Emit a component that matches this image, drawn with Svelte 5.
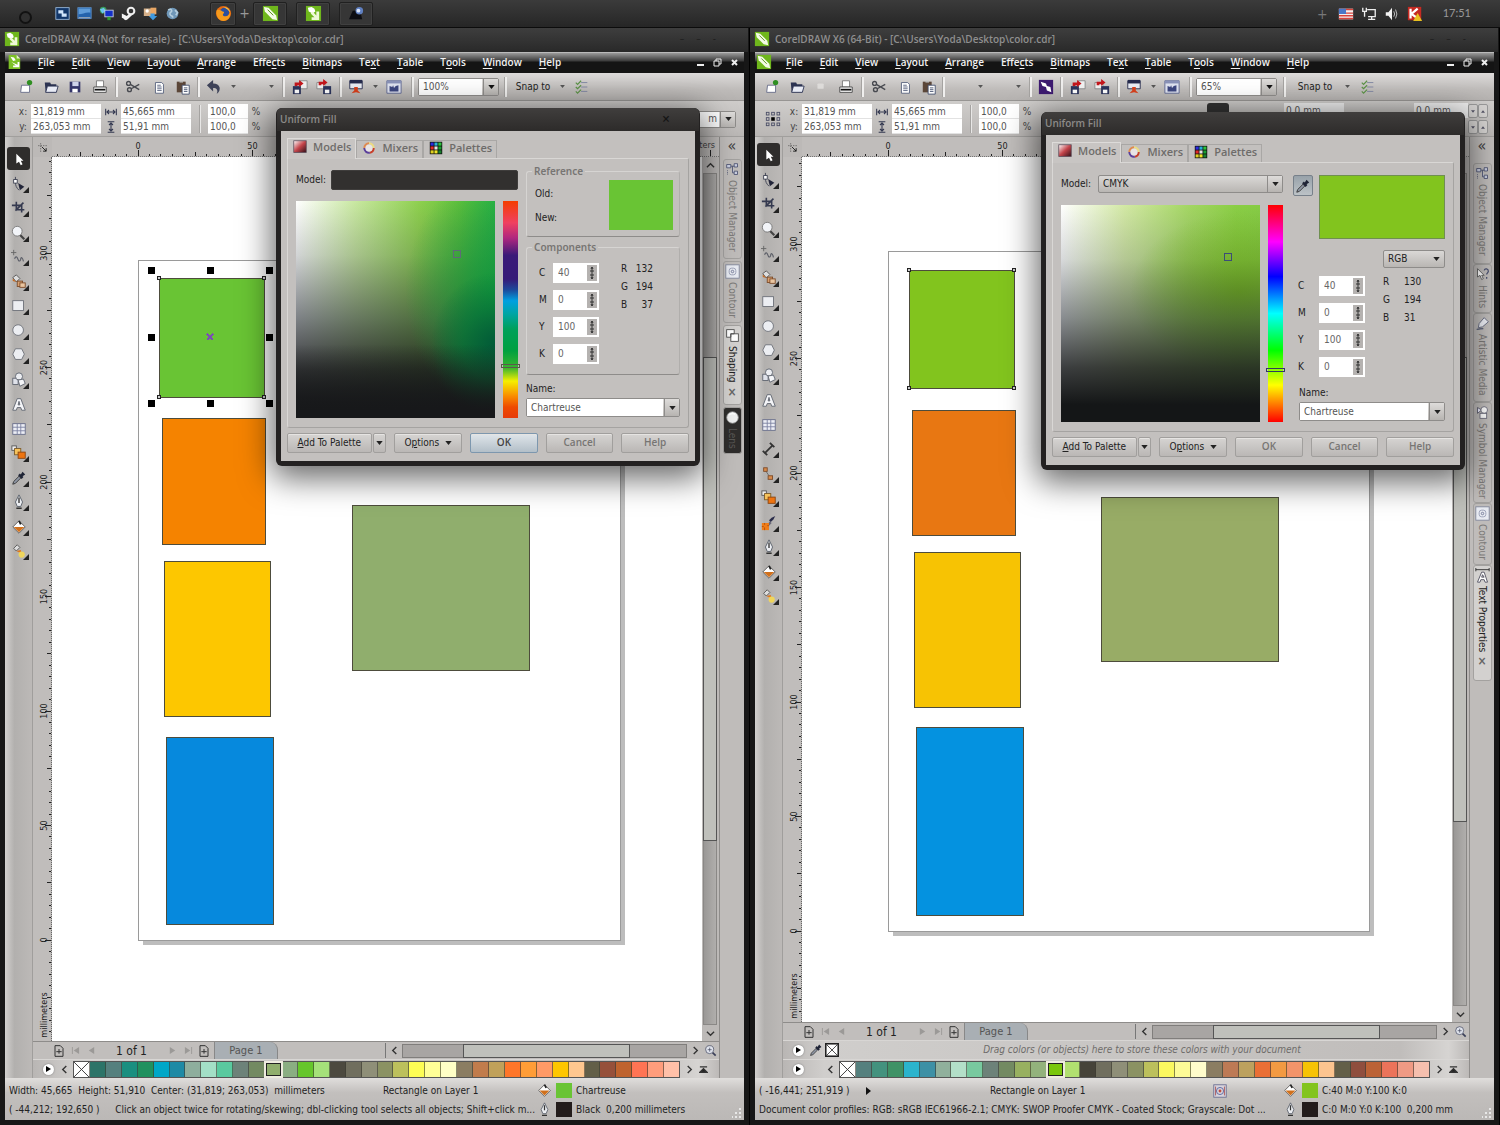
<script lang="ts">
  const icons: Record<string, string> = {
    corel4: '<rect x="1" y="1" width="16" height="16" fill="#6fb71c"/><path d="M3 3l4-1 3 2 1 3-3 2-4-2z" fill="#fff"/><path d="M8 7l4 4V7h3v9H7v-3h3L6 9z" fill="#eef8d8"/>',
    corel6: '<rect x="1" y="1" width="16" height="16" fill="#6fb71c"/><path d="M2 2l5 1 8 8 1 5-5-1-8-8z" fill="#f4fbe6"/><path d="M6 5l6 6" stroke="#4e8a10"/>',
    corelDoc: '<path d="M3 1h9l4 4v12H3z" fill="#7cc126"/><path d="M12 1v4h4" fill="#e6f5cf"/><path d="M5 3l4 1 2 3-3 1zM6 9l5 4H8v2h7V9h-2v3z" fill="#fff"/>',
    new: '<path d="M4 7h9v8H3z" fill="#fff" stroke="#666b88"/><circle cx="13" cy="4" r="3" fill="#2f8f22"/>',
    open: '<path d="M2 4h6l1 2h6v9H3z" fill="#2c3352"/><path d="M5 8h12l-2 7H3z" fill="#e8ebf5" stroke="#2c3352"/>',
    save: '<path d="M3 3h12v12H3z" fill="#34356a"/><path d="M6 3h7v5H6z" fill="#cfd3ea"/><path d="M6 11h6v4H6z" fill="#fff"/>',
    faint: '<rect x="5" y="5" width="7" height="6" rx="1" fill="#dddbd9"/>',
    print: '<path d="M5 2h8v7H5z" fill="#fff" stroke="#777"/><path d="M2 9h14v6H2z" fill="#fff" stroke="#444" /><path d="M3 12h12" stroke="#111" stroke-width="2"/>',
    cut: '<g fill="none" stroke="#484a50" stroke-width="1.5"><circle cx="4" cy="5" r="2.2"/><circle cx="5" cy="12" r="2.2"/><path d="M6 6l10 6M7 11l9-5"/></g>',
    copy: '<path d="M5 4h7l2 2v10H5z" fill="#fff" stroke="#56607c"/><path d="M7 7h4M7 9h5M7 11h5M7 13h5" stroke="#56607c"/>',
    paste: '<path d="M2 3h10v12H2z" fill="#5b4638"/><path d="M5 2h4v2H5z" fill="#b9b9b9"/><path d="M8 7h8v10H8z" fill="#fff" stroke="#44506e"/><path d="M10 10h4M10 12h4M10 14h4" stroke="#44506e"/>',
    undo: '<path d="M1 7l7-6v4c8 0 10 7 4 12 2-5 0-7-4-7v4z" fill="#3e4258"/>',
    import: '<path d="M9 2h8v9H9z" fill="#f2f2f2" stroke="#888"/><path d="M1 8h9v9H1z" fill="#2c355c"/><path d="M3 12h5v4H3z" fill="#fff"/><path d="M3 8V4h5V1l5 4-5 4V7H6v1z" fill="#c4161c"/>',
    export: '<path d="M1 4h9v7H1z" fill="#f2f2f2" stroke="#888"/><path d="M8 8h9v9H8z" fill="#2c355c"/><path d="M10 12h5v4h-5z" fill="#fff"/><path d="M3 7V3h5V0l5 4-5 4V6H6v1z" fill="#c4161c"/>',
    launch: '<path d="M2 2h14v9H2z" fill="#e9ecf4" stroke="#262b4d"/><path d="M2 1h14v4H2z" fill="#262b4d"/><path d="M7 9h4v4l3 3-5-1-5 1 3-3z" fill="#d8401c"/>',
    app: '<path d="M1 2h16v14H1z" fill="#dfe3f0" stroke="#5e6690"/><path d="M1 2h16v3H1z" fill="#8a92b8"/><path d="M4 8l3 1 1-2 1 3 2-2 3-1v7H4z" fill="#3d4780"/>',
    purple: '<rect x="1" y="1" width="16" height="16" fill="#3d1a70"/><path d="M3 3l6 2 1 3 4 1 1 6-5-2-1-4-4-1z" fill="#fff"/>',
    checks: '<path d="M2 4l2 2 4-4M2 9l2 2 4-4M2 14l2 2 4-4" fill="none" stroke="#5b9246" stroke-width="1.3"/><path d="M8 4h7M8 9h7M8 14h7" stroke="#7d84a0"/>',
    arrow: '<path d="M6 3v11l3-2 2 4 2-1-2-4h3z" fill="#fff"/>',
    shape: '<path d="M5 1v4M5 7c0 4 1 6 4 9" stroke="#3b3f50" fill="none"/><rect x="3" y="4" width="4" height="4" fill="#fff" stroke="#3b3f50"/><path d="M8 8l7 4-5 4z" fill="#23263a"/>',
    crop: '<path d="M1 6h11v8M6 2v9h9M5 12l9-9" stroke="#353a50" stroke-width="1.8" fill="none"/>',
    zoom: '<path d="M10 11l5 5" stroke="#444" stroke-width="2.5"/><circle cx="7" cy="7" r="5.500" fill="#f2f4f8" stroke="#777"/>',
    free: '<path d="M3 1v6M0 4h6" stroke="#666"/><path d="M4 11c2-4 3-2 4 1s3 1 3-1 2-2 3 3" fill="none" stroke="#5c5f68" stroke-width="1.3"/>',
    smart: '<path d="M2 4l4-3 4 4-4 4z" fill="#ddd" stroke="#555"/><path d="M2 5l4 4-4-1z" fill="#c86b20"/><rect x="7" y="8" width="6" height="6" fill="#d8a070" stroke="#7b4a28"/><rect x="10" y="10" width="6" height="5" fill="#e9c5a0" stroke="#7b4a28"/>',
    rect: '<rect x="2" y="3" width="12" height="11" fill="#eceef2" stroke="#6c7078"/>',
    ellipse: '<circle cx="8" cy="8" r="6" fill="#eceef2" stroke="#6c7078"/>',
    polygon: '<path d="M5 2h7l3 6-3 6H5L2 8z" fill="#eceef2" stroke="#6c7078"/>',
    basic: '<rect x="2" y="7" width="6" height="7" fill="#dfe2ea" stroke="#5f6470"/><circle cx="9" cy="5" r="4" fill="#eceef2" stroke="#5f6470"/><path d="M8 9l6-1 2 5-6 3z" fill="#f4f5f8" stroke="#5f6470"/>',
    text: '<path d="M2 16L7 3h4l5 13h-4l-1-3H7l-1 3zM8 10h2L9 6z" fill="#f4f5f8" stroke="#5f6470" fill-rule="evenodd"/>',
    table: '<rect x="2" y="3" width="14" height="12" fill="#eceef5" stroke="#666c88"/><path d="M7 3v12M11 3v12M2 7h14M2 11h14" stroke="#7b81a0"/>',
    dim: '<path d="M4 14L13 5" stroke="#333" stroke-width="2"/><path d="M2 11l5 5M10 2l5 5" stroke="#333" stroke-width="2"/>',
    connect: '<path d="M5 5l6 9" stroke="#666"/><rect x="3" y="2" width="4" height="4" fill="#d98a4a" stroke="#7b4a28"/><rect x="8" y="11" width="5" height="4" fill="#d98a4a" stroke="#7b4a28"/>',
    blend: '<rect x="1" y="1" width="5" height="5" fill="#eee" stroke="#555"/><rect x="4" y="4" width="7" height="7" fill="#f6c35c" stroke="#7b5a28"/><rect x="8" y="8" width="8" height="7" fill="#ee7410" stroke="#8a4410"/>',
    dropper: '<path d="M2 16l1-3 6-6 2 2-6 6z" fill="#8e96a4" stroke="#333"/><path d="M8 6l2-2 1 1 2-3 3 3-3 2 1 1-2 2z" fill="#1f2436"/>',
    attrs: '<path d="M7 11l3-4 2 2-3 3z" fill="#667"/><path d="M9 6l3-3 4-2-2 4-3 3z" fill="#2a2c4a"/><rect x="1" y="9" width="8" height="8" fill="#ee7c18"/><path d="M4 9v2M7 12h2M4 14v3M1 13h2" stroke="#b44e08"/>',
    pen: '<path d="M9 1l4 8-2 5H7L5 9z" fill="#eceef2" stroke="#555b66"/><path d="M9 4v6M6 16h6" stroke="#333" stroke-width="1.500"/>',
    fill: '<path d="M2 9l7-7 7 7-7 7z" fill="#fff" stroke="#555"/><path d="M3 9h12l-6 6z" fill="#d0701c"/><path d="M9 2l2 4" stroke="#222" stroke-width="2"/>',
    ifill: '<path d="M3 6l4-4 3 3-4 4z" fill="#ddd" stroke="#555"/><path d="M6 9l5-1 1 4z" fill="#e0771e"/><circle cx="12" cy="13" r="3.500" fill="#efd55c"/>',
    plus: '<path d="M3 1h8l4 4v12H3z" fill="none" stroke="#333" stroke-width="1.500"/><path d="M9 6v7M5 10h8" stroke="#333" stroke-width="1.500"/>',
    zoomin: '<path d="M11 11l5 5" stroke="#3b4058" stroke-width="2.500"/><circle cx="7" cy="7" r="6" fill="#dfe3ec" stroke="#3b4058"/><path d="M7 4v6M4 7h6" stroke="#3b4058"/>',
    none: '<rect x="1" y="1" width="16" height="16" fill="#fff" stroke="#222" stroke-width="2"/><path d="M2 2l14 14M16 2L2 16" stroke="#222"/>',
    mmodels: '<defs><linearGradient id="mm" x1="0" x2="1" y1="0" y2="1"><stop stop-color="#fff"/><stop offset=".5" stop-color="#c4444a"/><stop offset="1" stop-color="#301018"/></linearGradient></defs><rect x="1" y="1" width="16" height="15" fill="url(#mm)" stroke="#5a4a58"/>',
    mixers: '<g fill="none" stroke-width="2.600"><path d="M9 3a6 6 0 0 1 6 6" stroke="#ecdc80"/><path d="M15 9a6 6 0 0 1-5 6" stroke="#c8402c"/><path d="M10 15a6 6 0 0 1-7-6" stroke="#5a3f9c"/><path d="M3 9a6 6 0 0 1 6-6" stroke="#e08a50"/></g><circle cx="9" cy="9" r="4.500" fill="#e8e4e6"/>',
    palettes: '<path d="M1 1h16v16H1z" fill="#111"/><path d="M2 2h4v4H2z" fill="#2a2ae0"/><path d="M7 2h4v4H7z" fill="#28b0d8"/><path d="M12 2h4v4h-4z" fill="#2cc43c"/><path d="M2 7h4v4H2z" fill="#e02828"/><path d="M7 7h4v4H7z" fill="#e4e4e4"/><path d="M12 7h4v4h-4z" fill="#18a030"/><path d="M2 12h4v4H2z" fill="#e0d020"/><path d="M7 12h4v4H7z" fill="#f0e828"/><path d="M12 12h4v4h-4z" fill="#18802c"/>',
    objmgr: '<path d="M2 3h5v4H2zM11 2h4v4h-4zM11 11h4v4h-4zM7 5h4M9 5v8h2" fill="#c9cee0" stroke="#4a5070"/><path d="M3 10v6" stroke="#4a5070" stroke-dasharray="1 1"/>',
    contour: '<rect x="1" y="1" width="16" height="16" fill="#e8ebf2" stroke="#7c8298"/><rect x="5" y="5" width="8" height="8" rx="3" fill="none" stroke="#9298b0"/><circle cx="9" cy="9" r="1.500" fill="none" stroke="#6a7090"/>',
    shaping: '<rect x="2" y="2" width="9" height="9" fill="#fff" stroke="#444"/><rect x="7" y="7" width="9" height="9" fill="#fff" stroke="#444"/><path d="M7 11V7h4" fill="none" stroke="#444"/>',
    lens: '<circle cx="9" cy="9" r="7" fill="#f0f0f0" stroke="#888"/><path d="M5 6a6 6 0 0 1 7-1" stroke="#fff" stroke-width="2" fill="none"/>',
    hints: '<path d="M3 2v10l3-2 2 5 2-1-2-4h3z" fill="#fff" stroke="#555"/><path d="M11 4c1-3 5-2 5 1 0 2-2 2-2 4M14 12v2" fill="none" stroke="#4a5070" stroke-width="1.500"/>',
    artistic: '<path d="M11 2l5 5-7 6-5 1 1-5z" fill="#eef0f6" stroke="#5a6078"/><path d="M2 16c3 0 5-1 8-1" stroke="#5a6078" stroke-width="1.500"/>',
    symbol: '<path d="M3 3l5 3-5 4z" fill="#eef" stroke="#556"/><circle cx="11" cy="6" r="4" fill="#fff" stroke="#667"/><rect x="6" y="10" width="8" height="6" fill="#fff" stroke="#667"/>',
    textprop: '<path d="M1 2h16M1 0v4M17 0v4" stroke="#222"/><path d="M3 17L8 5h3l4 12h-3l-1-3H7l-1 3zM8 11h3L9 8z" fill="#fff" fill-rule="evenodd" stroke="#445"/>',
    profile: '<rect x="2" y="2" width="14" height="14" fill="#d8d4dc" stroke="#6b6f92"/><circle cx="9" cy="9" r="4" fill="none" stroke="#5562a0"/><circle cx="9" cy="9" r="1.600" fill="#c05040"/><path d="M4 4v10M14 4v10" stroke="#a55"/>',
    hsize: '<path d="M1 4v10M17 4v10M3 9h12M6 6L3 9l3 3M12 6l3 3-3 3" stroke="#333850" stroke-width="1.600" fill="none"/>',
    vsize: '<path d="M4 1h10M4 17h10M9 3v12M6 6l3-3 3 3M6 12l3 3 3-3" stroke="#333850" stroke-width="1.600" fill="none"/>',
    grid9: '<g fill="none" stroke="#4a4d66"><rect x="1.500" y="1.500" width="3" height="3"/><rect x="7.500" y="1.500" width="3" height="3"/><rect x="13.500" y="1.500" width="3" height="3"/><rect x="1.500" y="7.500" width="3" height="3"/><rect x="13.500" y="7.500" width="3" height="3"/><rect x="1.500" y="13.500" width="3" height="3"/><rect x="7.500" y="13.500" width="3" height="3"/><rect x="13.500" y="13.500" width="3" height="3"/></g><rect x="7" y="7" width="4" height="4" fill="#000"/>',
    origin: '<path d="M2 6h14M6 2v14" stroke="#333" stroke-dasharray="2 2"/><path d="M8 8l7 7M15 10v5h-5" stroke="#111" fill="none" stroke-width="1.400"/>',
    tExplorer: '<rect x="1" y="2" width="16" height="14" fill="#12376a" stroke="#9fc0e4"/><path d="M4 5h6v4H4zM8 9h6v4H8z" fill="#cfe4fa"/>',
    tDesktop: '<rect x="1" y="2" width="16" height="13" fill="#2463ac" stroke="#5f8ec4"/><path d="M2 3h14v5c-6-1-9 2-14 2z" fill="#5f9cd8"/><path d="M2 14h14" stroke="#bbb"/>',
    tNet: '<circle cx="5" cy="5" r="4" fill="#379a58"/><path d="M1 4l5-2 2 4-4 3z" fill="#6cc4f0"/><rect x="7" y="5" width="10" height="8" fill="#1430c8" stroke="#cfd8e8"/><path d="M10 13h4v4h-4z" fill="#2f9a34"/>',
    tSteam: '<circle cx="12" cy="6" r="4" fill="#333" stroke="#eee" stroke-width="2.500"/><path d="M1 9l6 3 3-3 3 2-5 5a3 3 0 0 1-5-1l-2-1z" fill="#f3f3f3"/>',
    tPeople: '<rect x="1" y="3" width="9" height="9" fill="#d6b18a"/><rect x="9" y="2" width="7" height="8" fill="#e9a765"/><path d="M9 9h5v3h3l-5 5-5-5h2z" fill="#3f9ae0"/><circle cx="5" cy="6" r="2" fill="#fff"/>',
    tGlobe: '<circle cx="9" cy="9" r="7" fill="#6f97b8"/><path d="M4 5c2-2 4-1 4 1s-3 1-2 4 4 1 3 4M12 5l3 3-2 3" fill="none" stroke="#b5cede" stroke-width="2"/>',
    firefox: '<circle cx="9" cy="9" r="8" fill="#e66a10"/><circle cx="10" cy="8" r="5" fill="#2b4f9e"/><path d="M2 5c2 0 4 0 6 2 2 0 2 1 1 2s-1 3 2 3c3 0 4-2 5-4 1 5-3 9-7 9S0 12 2 5z" fill="#f49a1c"/><path d="M9 2c4 0 7 3 7 6-1-2-3-4-7-6z" fill="#fbd04c"/>',
    tDark: '<path d="M1 15l4-9h8l2 9z" fill="#0c0d12"/><circle cx="12" cy="6" r="4" fill="#5f7fc0"/><circle cx="11" cy="6" r="2" fill="#dbe6fa"/>',
    flag: '<rect x="1" y="3" width="16" height="12" fill="#f3f0f0"/><path d="M1 4h16M1 8h16M1 11h16M1 14h16" stroke="#d8443c" stroke-width="1.600"/><rect x="1" y="3" width="8" height="6" fill="#4a78c8"/>',
    tLan: '<path d="M2 2v4h4V2M4 6v6M7 4h9v8H8M12 12v3M8 15h8" fill="none" stroke="#eee" stroke-width="1.500"/>',
    tSound: '<path d="M2 7h3l4-5v14l-4-5H2z" fill="#f3f3f3"/><path d="M11 6q2 3 0 6M13 4q3 5 0 10" fill="none" stroke="#ccc"/>',
    tK: '<rect x="1" y="1" width="15" height="15" fill="#c52a22"/><path d="M4 3v11M12 3L5 9l7 5" stroke="#fff" stroke-width="2.500" fill="none"/><path d="M12 8l5 9H7z" fill="#e8c020"/>',
  };

  type Item = { k: string; w: number; n?: string };
  const ic = (n: string, w = 24): Item => ({ k: 'icon', n, w });
  const sep = (w = 8): Item => ({ k: 'sep', w });
  const car = (w = 14): Item => ({ k: 'caret', w });
  const gap = (w: number): Item => ({ k: 'gap', w });

  const swatches = ['#2c7468','#55807e','#1a8f80','#20915f','#00a7c8','#1e8aa5','#8eae9d','#a3dfc6','#5ac99f','#6d8279','#738a62','#90ae6d','#8aae82','#66c62c','#a5e17a','#4c493f','#706e5e','#8f8f78','#8b9263','#bcc05c','#fdfd55','#ffff97','#ffffc6','#8b7d62','#c17c4c','#c0a15a','#ff7629','#ff9d37','#ff9a66','#fec600','#ffc78f','#635f48','#96503a','#bf632e','#ff7454','#ff9d7c','#ffc0a8'];
  const swatches6 = ['#55807e','#43927e','#3f9266','#2bb4cd','#3d90a5','#90b09c','#b3dfc8','#78c99f','#6d8279','#738a62','#98b060','#93b27c','#7ac70c','#b1e070','#464339','#706e5e','#8f8f78','#8b9263','#bcc05c','#fbf860','#fdfb97','#fffccb','#8b7d62','#bd7a55','#bca15e','#ea6f35','#f29a42','#f2946a','#f6c305','#fcc48f','#635f48','#8f4e3e','#bb6236','#eb735a','#ef9a84','#f5bfae'];

  const menus = [['','F','ile'],['','E','dit'],['','V','iew'],['','L','ayout'],['','A','rrange'],['Effe','c','ts'],['','B','itmaps'],['Te','x','t'],['','T','able'],['T','o','ols'],['','W','indow'],['','H','elp']];

  const wins = [
    {
      id: 'x4', logo: 'corel4', doc: 'corelDoc', title: 'CorelDRAW X4 (Not for resale) - [C:\\Users\\Yoda\\Desktop\\color.cdr]', zoom: '100%',
      tools: [gap(8), ic('new', 25), ic('open', 25), ic('save'), ic('print', 25), sep(), ic('cut', 25), ic('copy', 27), ic('paste', 22), sep(), ic('undo'), car(), gap(24), car(), sep(10), ic('import'), ic('export'), sep(), ic('launch'), car(), ic('app'), sep(12), { k: 'combo', w: 81 }, sep(12), { k: 'snap', w: 44 }, car(), ic('checks', 26)] as Item[],
      box: ['arrow','shape','crop','zoom','free','smart','rect','ellipse','polygon','basic','text','table','blend','dropper','pen','fill','ifill'],
      y0: 783, page: [86, 103, 482, 680],
      shapes: [[107,121,105,119,'#69c434'],[110,261,103,126,'#f58300'],[112,404,106,155,'#fdc700'],[114,580,107,187,'#0689dd'],[300,348,177,165,'#90ae6d']],
      pal: swatches, sel: 11,
      docks: [['objmgr','Object Manager','',100],['contour','Contour','',62],['shaping','Shaping','on',80],['lens','Lens','dark',47]],
      mmY: 858,
    },
    {
      id: 'x6', logo: 'corel6', doc: 'corel6', title: 'CorelDRAW X6 (64-Bit) - [C:\\Users\\Yoda\\Desktop\\color.cdr]', zoom: '65%',
      tools: [gap(4), ic('new', 25), ic('open', 25), ic('faint'), ic('print', 25), sep(), ic('cut', 25), ic('copy', 27), ic('paste', 21), sep(), gap(26), car(), gap(24), car(), sep(10), ic('purple', 22), sep(), ic('import', 25), ic('export'), sep(), ic('launch'), car(), ic('app'), sep(12), { k: 'combo', w: 81 }, sep(14), { k: 'snap', w: 48 }, car(16), ic('checks', 26)] as Item[],
      box: ['arrow','shape','crop','zoom','free','smart','rect','ellipse','polygon','basic','text','table','dim','connect','blend','attrs','pen','fill','ifill'],
      y0: 774, page: [86, 94, 481, 680],
      shapes: [[107,113,105,118,'#82c41e'],[110,253,103,125,'#e87712'],[112,395,106,155,'#f7c303'],[114,570,107,188,'#0492e0'],[299,340,177,164,'#98ac66']],
      pal: swatches6, sel: 12,
      docks: [['objmgr','Object Manager','',101],['hints','Hints','',49],['artistic','Artistic Media','',89],['symbol','Symbol Manager','',101],['contour','Contour','',62],['textprop','Text Properties','on',116]],
      mmY: 839,
    },
  ];

  const unit = 2.29;
  const hticks = Array.from({ length: 60 }, (_, i) => i - 7);
  const vticks = Array.from({ length: 84 }, (_, i) => i - 12);
  const tickLen = (i: number) => (i % 10 === 0 ? 7 : i % 5 === 0 ? 5 : 3);
  const noTool = ['arrow', 'text', 'table'];
</script>

{#snippet icon(name: string)}
  <svg class="ic" viewBox="0 0 18 18" aria-hidden="true">{@html icons[name]}</svg>
{/snippet}

{#snippet caret()}
  <svg class="caret" viewBox="0 0 8 5" aria-hidden="true"><path d="M0 0h8L4 5z" /></svg>
{/snippet}

{#snippet chev(d: string)}
  <svg class="chev" viewBox="0 0 10 10" aria-hidden="true"><path {d} /></svg>
{/snippet}

{#snippet dialog(w: string)}
  {@const x6 = w === 'x6'}
  <section class="dialog {w}" aria-label="Uniform Fill">
    <header class="dtitle"><span>Uniform Fill</span><button class="dclose" aria-label="Close dialog">{#if !x6}×{/if}</button></header>
    <div class="dbody">
      <div class="tabs">
        <button class="tab on">{@render icon('mmodels')}Models</button>
        <button class="tab">{@render icon('mixers')}Mixers</button>
        <button class="tab">{@render icon('palettes')}Palettes</button>
      </div>
      <div class="panel">
        <div class="left">
          <div class="model">
            <label for="model-{w}">Model:</label>
            <span class="sel" class:black={!x6}>
              <select id="model-{w}"><option>{x6 ? 'CMYK' : ''}</option></select>
              {#if x6}<span class="drop">{@render caret()}</span>{/if}
            </span>
          </div>
          <div class="pick">
            <div class="field"><i></i></div>
            <div class="hue"><i></i></div>
          </div>
        </div>
        <div class="right">
          {#if x6}
            <div class="top6">
              <button class="eye" aria-label="Eyedropper">{@render icon('dropper')}</button>
              <div class="bigsw"></div>
            </div>
            <div class="rgbsel"><span class="sel"><select aria-label="Color mode"><option>RGB</option></select><span class="drop plain">{@render caret()}</span></span></div>
            {@render comps(w, ['130', '194', '31'])}
          {:else}
            <fieldset class="ref">
              <legend>Reference</legend>
              <div class="labels"><span>Old:</span><span>New:</span></div>
              <div class="refsw"></div>
            </fieldset>
            <fieldset>
              <legend>Components</legend>
              {@render comps(w, ['132', '194', '37'])}
            </fieldset>
          {/if}
          <div class="name">
            <label for="name-{w}">Name:</label>
            <span class="sel white">
              <select id="name-{w}"><option>Chartreuse</option></select>
              <span class="drop">{@render caret()}</span>
            </span>
          </div>
        </div>
      </div>
      <div class="btns">
        <button class="b add"><span><u>A</u>dd To Palette</span></button>
        <button class="b split" aria-label="Palette list">{@render caret()}</button>
        <button class="b opt"><span>O<u>p</u>tions</span>{@render caret()}</button>
        <button class="b act" class:def={!x6}>OK</button>
        <button class="b act">Cancel</button>
        <button class="b act">Help</button>
      </div>
    </div>
  </section>
{/snippet}

{#snippet comps(w: string, rgb: string[])}
  <div class="comps">
    <div class="cmyk">
      {#each [['C', '40'], ['M', '0'], ['Y', '100'], ['K', '0']] as [l, v]}
        <label for="{l}-{w}">{l}</label>
        <span class="num"><input id="{l}-{w}" value={v} /><button aria-label="Adjust {l}"><svg viewBox="0 0 8 14"><path d="M4 1v12M2 5h4M2 9h4M3 3l1-2 1 2M3 11l1 2 1-2" /></svg></button></span>
      {/each}
    </div>
    <dl class="rgb">
      {#each ['R', 'G', 'B'] as l, i}<dt>{l}</dt><dd>{rgb[i]}</dd>{/each}
    </dl>
  </div>
{/snippet}

<div class="desk">
  <header class="taskbar">
    <button class="orb" aria-label="Start"><i></i></button>
    <div class="quick">
      {#each ['tExplorer', 'tDesktop', 'tNet', 'tSteam', 'tPeople', 'tGlobe'] as n}<button aria-label={n.slice(1)}>{@render icon(n)}</button>{/each}
    </div>
    <div class="tasks">
      <button class="task ff" aria-label="Firefox">{@render icon('firefox')}</button>
      <span class="tplus">+</span>
      <button class="task" aria-label="CorelDRAW X6">{@render icon('corel6')}</button>
      <button class="task" aria-label="CorelDRAW X4">{@render icon('corel4')}</button>
      <button class="task" aria-label="Viewer">{@render icon('tDark')}</button>
    </div>
    <div class="tray">
      <span class="tplus">+</span>
      {@render icon('flag')}{@render icon('tLan')}{@render icon('tSound')}{@render icon('tK')}
      <time>17:51</time>
    </div>
  </header>

  <main>
    {#each wins as w}
      {@const x6 = w.id === 'x6'}
      <section class="win">
        <header class="title">{@render icon(w.logo)}<h1>{w.title}</h1><span class="faintbtns"><i>–</i><i>–</i><i>-</i></span></header>
        <nav class="menu">
          <span class="doc">{@render icon(w.doc)}</span>
          {#each menus as m}<button>{m[0]}<u>{m[1]}</u>{m[2]}</button>{/each}
          <span class="wbtns"><button aria-label="Minimize">
            <svg viewBox="0 0 9 9"><path d="M1 7h7" stroke-width="2" /></svg></button><button aria-label="Restore">
            <svg viewBox="0 0 9 9"><path d="M3 3V1h5v5H6M1 3h5v5H1z" /></svg></button><button aria-label="Close">
            <svg viewBox="0 0 9 9"><path d="M2 2l5 5M7 2L2 7" stroke-width="2" /></svg></button></span>
        </nav>

        <div class="toolbar">
          {#each w.tools as t}
            <span class="cell {t.k}" style:width="{t.w}px">
              {#if t.k === 'icon'}<button aria-label={t.n}>{@render icon(t.n ?? '')}</button>
              {:else if t.k === 'caret'}{@render caret()}
              {:else if t.k === 'combo'}<span class="sel white"><select aria-label="Zoom level"><option>{w.zoom}</option></select><span class="drop">{@render caret()}</span></span>
              {:else if t.k === 'snap'}Snap to{/if}
            </span>
          {/each}
        </div>

        <div class="props {w.id}">
          {#if x6}<span class="nine">{@render icon('grid9')}</span>{/if}
          <div class="pair"><label for="px-{w.id}">x:</label><input id="px-{w.id}" value="31,819 mm" /><label for="py-{w.id}">y:</label><input id="py-{w.id}" value="263,053 mm" /></div>
          <div class="pair wh"><span>{@render icon('hsize')}</span><input aria-label="Width" value="45,665 mm" /><span>{@render icon('vsize')}</span><input aria-label="Height" value="51,91 mm" /></div>
          <span class="vsep"></span>
          <div class="pair pc"><input aria-label="Scale x" value="100,0" /><span>%</span><input aria-label="Scale y" value="100,0" /><span>%</span></div>
          <div class="pright">
            {#if x6}
              <span class="darkchip"></span>
              <input aria-label="Outline left" value="0,0 mm" />
              <input aria-label="Outline right" value="0,0 mm" />
              <span class="spins">{#each [0, 1, 2, 3] as s}<button aria-label="Step {s}">{@render caret()}</button>{/each}</span>
            {:else}
              <span class="sel white"><select aria-label="Outline width"><option>m</option></select><span class="drop">{@render caret()}</span></span>
            {/if}
          </div>
        </div>

        <div class="mid">
          <div class="toolbox {w.id}">
            {#each w.box as b, i}
              <button class:active={i === 0} class:fly={!noTool.includes(b)} aria-label={b}>{@render icon(b)}</button>
            {/each}
          </div>

          <div class="work">
            <div class="stage">
              <div class="corner">{@render icon('origin')}</div>
              <div class="rule h">
                <svg>
                  {#each hticks as i}
                    <line x1={86 + i * 5 * unit} x2={86 + i * 5 * unit} y1={20 - tickLen(i)} y2="19" />
                    {#if i === 0 || i === 10}<text x={86 + i * 5 * unit} y="12" text-anchor="middle">{i * 5}</text>{/if}
                  {/each}
                </svg>
                {#if !x6}<span class="unit">millimeters</span>{/if}
              </div>
              <div class="rule v">
                <svg>
                  {#each vticks as i}
                    {@const y = w.y0 - i * 5 * unit}
                    <line y1={y} y2={y} x1={19 - tickLen(i)} x2="19" />
                    {#if i % 10 === 0 && i >= 0 && i <= 60}<text transform="translate(14 {y}) rotate(-90)" text-anchor="middle">{i * 5}</text>{/if}
                  {/each}
                  <text transform="translate(14 {w.mmY}) rotate(-90)" text-anchor="middle">millimeters</text>
                </svg>
              </div>
              <div class="canvas">
                <svg>
                  <rect x={w.page[0] + 5} y={w.page[1] + 5} width={w.page[2]} height={w.page[3]} fill="#bdbdbd" />
                  <rect x={w.page[0]} y={w.page[1]} width={w.page[2]} height={w.page[3]} fill="#fff" stroke="#9a9a9a" />
                  {#each w.shapes as s}
                    <rect x={s[0]} y={s[1]} width={s[2]} height={s[3]} fill={s[4]} stroke="#4d4c3c" />
                  {/each}
                  {#each [107, 212] as hx}{#each [Number(w.shapes[0][1]), Number(w.shapes[0][1]) + Number(w.shapes[0][3])] as hy}
                    <rect x={hx - 2} y={hy - 2} width="3" height="3" fill="#ccc" stroke="#222" />
                  {/each}{/each}
                  {#if !x6}
                    {#each [99, 158, 217] as hx, a}{#each [113, 180, 246] as hy, b}
                      {#if a === 1 && b === 1}<path d="M155 177l6 6M161 177l-6 6" stroke="#7b50b0" stroke-width="2" />
                      {:else}<rect x={hx - 3} y={hy - 3} width="7" height="7" fill="#000" />{/if}
                    {/each}{/each}
                  {/if}
                </svg>
              </div>
              <div class="vscroll">
                <button aria-label="Scroll up">{@render chev('M1 7l4-4 4 4')}</button>
                <div class="track"><i class="thumb"></i></div>
                <button aria-label="Scroll down">{@render chev('M1 3l4 4 4-4')}</button>
              </div>
            </div>

            <div class="pagenav">
              <button aria-label="Add page before">{@render icon('plus')}</button>
              <button class="dim" aria-label="First page"><svg class="ar" viewBox="0 0 10 10"><path d="M9 1v8L3 5zM1 1h1v8H1z" /></svg></button>
              <button class="dim" aria-label="Previous page"><svg class="ar" viewBox="0 0 10 10"><path d="M8 1v8L2 5z" /></svg></button>
              <span class="of">1 of 1</span>
              <button class="dim" aria-label="Next page"><svg class="ar" viewBox="0 0 10 10"><path d="M2 1v8l6-4z" /></svg></button>
              <button class="dim" aria-label="Last page"><svg class="ar" viewBox="0 0 10 10"><path d="M1 1v8l6-4zM8 1h1v8H8z" /></svg></button>
              <button aria-label="Add page after">{@render icon('plus')}</button>
              <button class="ptab">Page 1</button>
              <span class="rest"></span>
              <button aria-label="Scroll left">{@render chev('M7 1L3 5l4 4')}</button>
              <div class="htrack"><i class="thumb"></i></div>
              <button aria-label="Scroll right">{@render chev('M3 1l4 4-4 4')}</button>
              <button class="zi" aria-label="Navigator">{@render icon('zoomin')}</button>
            </div>

            {#if x6}
              <div class="palette docpal">
                <button class="play" aria-label="Palette menu"><i></i></button>
                {@render icon('dropper')}{@render icon('none')}
                <em>Drag colors (or objects) here to store these colors with your document</em>
              </div>
            {/if}
            <div class="palette">
              <button class="play" aria-label="Color menu"><i></i></button>
              {#if x6}<span class="ghost"></span>{/if}
              <button class="pl" aria-label="Previous colors">{@render chev('M7 1L3 5l4 4')}</button>
              <div class="sws">
                <button class="sw nocol" aria-label="No color"><svg viewBox="0 0 16 16"><path d="M0 0l16 16M16 0L0 16" /></svg></button>
                {#each w.pal as c, i}<button class="sw" class:picked={i === w.sel} style:background={c} aria-label={c}></button>{/each}
              </div>
              <button class="pr" aria-label="Next colors">{@render chev('M3 1l4 4-4 4')}</button>
              <button class="pe" aria-label="Expand">{@render chev('M1 2h8M1 8l4-4 4 4z')}</button>
            </div>
          </div>

          <aside class="dock {w.id}">
            <button class="coll" aria-label="Collapse">«</button>
            {#each w.docks as d}
              <button class="dtab {d[2]}" style:height="{d[3]}px">{@render icon(String(d[0]))}<span>{d[1]}</span>{#if d[2] === 'on'}<b>×</b>{/if}</button>
            {/each}
          </aside>
        </div>

        <footer class="status {w.id}">
          {#if x6}
            <div class="s1"><span class="pos">( -16,441; 251,919 )</span><i class="tri"></i><span class="obj">Rectangle on Layer 1</span>{@render icon('profile')}</div>
            <div class="fi">{@render icon('fill')}<i class="chip green"></i><span>C:40 M:0 Y:100 K:0</span></div>
            <div class="s2">Document color profiles: RGB: sRGB IEC61966-2.1; CMYK: SWOP Proofer CMYK - Coated Stock; Grayscale: Dot ...</div>
            <div class="fi">{@render icon('pen')}<i class="chip"></i><span>C:0 M:0 Y:0 K:100&nbsp; 0,200 mm</span></div>
          {:else}
            <div class="s1"><span class="pos">Width: 45,665&nbsp; Height: 51,910&nbsp; Center: (31,819; 263,053)&nbsp; millimeters</span><span class="obj">Rectangle on Layer 1</span></div>
            <div class="fi">{@render icon('fill')}<i class="chip green"></i><span>Chartreuse</span></div>
            <div class="s2"><span class="pos2">( -44,212; 192,650 )</span><span>Click an object twice for rotating/skewing; dbl-clicking tool selects all objects; Shift+click m...</span></div>
            <div class="fi">{@render icon('pen')}<i class="chip"></i><span>Black&nbsp; 0,200 millimeters</span></div>
          {/if}
          <svg class="grip" viewBox="0 0 10 10"><path d="M8 0v2M8 4v2M8 8v2M4 4v2M4 8v2M0 8v2" /></svg>
        </footer>
        {@render dialog(w.id)}
      </section>
    {/each}
  </main>
</div>

<style>
  :global(body) { background: #0d0d0d; }
  .desk, .desk :global(*) { box-sizing: border-box; }
  .desk {
    display: flex; flex-direction: column; min-height: 100vh;
    font: 10px/12px "DejaVu Sans Condensed", "Noto Sans", sans-serif; color: #222; overflow: hidden;
  }
  button, input, select { font: inherit; color: inherit; margin: 0; padding: 0; border: 0; background: none; border-radius: 0; }
  button { display: flex; align-items: center; justify-content: center; }
  i { font-style: normal; }
  h1, dl, dd, dt { margin: 0; font: inherit; }
  .ic { width: 16px; height: 16px; flex: none; display: block; }
  .caret { width: 7px; height: 4px; fill: #222; flex: none; }
  .chev { width: 9px; height: 9px; fill: none; stroke: #333; stroke-width: 1.5; }

  .taskbar { display: flex; align-items: center; height: 28px; background: linear-gradient(#3b3b3b, #262626); border-bottom: 1px solid #0c0c0c; }
  .orb { width: 26px; margin-left: 12px; height: 24px; padding-top: 8px; }
  .orb i { width: 13px; height: 13px; border-radius: 50%; border: 2px solid #121212; background: #303030; }
  .quick { display: flex; margin: 0 27px 0 13px; }
  .quick button { width: 22px; }
  .quick .ic { width: 15px; height: 15px; }
  .tasks { display: flex; align-items: center; }
  .task { width: 34px; height: 24px; margin-right: 9px; border: 1px solid #202020; border-radius: 2px; background: #363636; box-shadow: inset 0 0 0 1px #404040; }
  .task .ic { width: 17px; height: 17px; }
  .task.ff { width: 26px; margin: 0; }
  .tplus { width: 17px; text-align: center; color: #999; font-size: 14px; padding-bottom: 2px; }
  .tray { display: flex; align-items: center; gap: 7px; margin-left: auto; padding-right: 29px; }
  .tray .tplus { color: #777; padding: 0; }
  .tray time { margin-left: 13px; font: 11px/14px Lato, sans-serif; color: #999; padding-bottom: 2px; }

  main { flex: 1; display: grid; grid-template-columns: 1fr 1fr; }
  .win { position: relative; display: flex; flex-direction: column; min-width: 0; padding: 0 5px 5px; background: #171717; border-right: 1px solid #000; }
  .title { display: flex; align-items: center; height: 24px; margin: 0 -4px 0 -5px; padding: 0 32px 2px 4px; gap: 5px; background: linear-gradient(#3e3e3e, #292929); color: #8f8f8f; }
  .title h1 { font: 600 10px/14px "Open Sans", sans-serif; }
  .faintbtns { margin-left: auto; display: flex; gap: 12px; color: #1e1e1e; }
  .menu { display: flex; align-items: center; gap: 17px; height: 21px; flex: none; padding: 0 5px 2px 1px; border-top: 1px solid #bbb; background: linear-gradient(#9a9a9a, #3a3a3a 40%, #141414 45%, #141414); color: #f2f2f2; font: 600 10px/14px "Open Sans", sans-serif; }
  .menu .doc { width: 15px; }
  .win:nth-child(2) .doc { width: 13px; }
  .menu u { text-underline-offset: 2px; }
  .wbtns { margin-left: auto; display: flex; gap: 8px; }
  .wbtns svg { width: 9px; height: 9px; fill: none; stroke: #eee; }

  .toolbar { display: flex; align-items: center; height: 28px; flex: none; background: linear-gradient(#dddbda, #bfbcba 60%, #b5b2b0); border-bottom: 1px solid #979593; white-space: nowrap; }
  .cell { flex: none; display: flex; align-items: center; justify-content: center; height: 20px; }
  .cell.sep::before { content: ''; width: 2px; height: 20px; background: #f0efee; border-left: 1px solid #a5a3a1; }
  .cell.combo { height: 18px; }
  .cell .caret { width: 5px; height: 3px; fill: #555; }
  .cell.combo .caret { width: 7px; height: 4px; fill: #111; }

  .sel { position: relative; display: flex; flex: 1; height: 100%; min-width: 0; border: 1px solid #8e8c8a; border-radius: 2px; background: linear-gradient(#dad8d6, #b9b6b3); }
  .sel select { appearance: none; flex: 1; width: 100%; min-width: 0; padding-left: 4px; outline: none; }
  .sel.white select { background: #fff; color: #555; margin-right: 16px; }
  .drop { position: absolute; right: 0; top: 0; bottom: 0; width: 15px; display: flex; align-items: center; justify-content: center; border-left: 1px solid #8e8c8a; background: linear-gradient(#dedcda, #b7b4b1); pointer-events: none; }
  .drop.plain { border: 0; background: none; }
  .sel.black { background: #32302f; border-color: #3f3d3c; }

  .props { display: flex; align-items: center; height: 36px; flex: none; padding: 1px 8px 0 10px; background: linear-gradient(#cfcdcb, #bab7b5); border-bottom: 1px solid #a19f9d; color: #444; }
  .nine { width: 21px; }
  .props.x6 { padding: 1px 6px 0 10px; }
  .pair { display: grid; grid-template-columns: 16px 70px; grid-template-rows: 15px 15px; align-items: center; justify-items: center; }
  .pair input { width: 100%; height: 15px; background: #fff; padding-left: 2px; color: #555; border-bottom: 1px solid #e2e2e2; }
  .pair label { color: #444; }
  .pair .ic { width: 12px; height: 12px; }
  .wh { grid-template-columns: 20px 70px; }
  .vsep { width: 2px; height: 28px; margin: 0 7px 0 8px; background: #e8e7e6; border-left: 1px solid #a5a3a1; }
  .pc { grid-template-columns: 40px 16px; }
  .pright { margin-left: auto; display: flex; align-items: center; height: 32px; }
  .pright .sel { width: 90px; flex: none; height: 17px; }
  .pright select { direction: rtl; padding: 0 2px; }
  .x6 .pright input { width: 60px; height: 15px; background: #eee; align-self: flex-start; margin-right: 70px; padding-left: 2px; color: #555; }
  .x6 .pright input + input { width: 54px; margin-right: 0; }
  .darkchip { width: 22px; height: 12px; margin-right: 55px; align-self: flex-start; background: #333; border-radius: 3px; }
  .spins { display: grid; grid-template-columns: 10px 10px; gap: 2px 0; height: 30px; }
  .spins button { border: 1px solid #999; background: #d5d3d1; border-radius: 2px; }
  .spins .caret { width: 4px; height: 3px; fill: #556; }
  .spins button:nth-child(even) .caret { transform: rotate(180deg); }

  .mid { flex: 1; display: flex; min-height: 600px; background: #bcb9b7; }
  .toolbox { width: 28px; flex: none; padding: 10px 2px 0; display: flex; flex-direction: column; border-right: 1px solid #a09e9c; background: linear-gradient(90deg, #d2d0ce, #b2b0ae 35%, #bcb9b7); }
  .toolbox.x6 { padding-top: 6px; }
  .toolbox button { position: relative; width: 24px; height: 24px; }
  .toolbox button:nth-child(even) { height: 25px; }
  .toolbox .active { background: #2f2d2c; border-radius: 3px; width: 23px; height: 23px; margin-bottom: 1px; }
  .fly::after { content: ''; position: absolute; right: 2px; bottom: 3px; border: 3px solid; border-color: transparent #222 #222 transparent; }

  .work { flex: 1; min-width: 0; display: flex; flex-direction: column; }
  .stage { flex: 1; display: grid; grid-template-columns: 19px 1fr 17px; grid-template-rows: 20px 1fr; min-height: 0; }
  .corner { display: flex; align-items: center; justify-content: center; }
  .corner .ic { width: 11px; height: 11px; }
  .rule { position: relative; overflow: hidden; background: #c0bdbb; }
  .rule.h { grid-column: 2 / 4; border-bottom: 1px dotted #777; display: flex; justify-content: flex-end; padding: 2px 4px 0 0; color: #444; }
  .unit { font-size: 9px; }
  .rule.v { border-right: 1px dotted #666; }
  .rule svg, .canvas svg { position: absolute; inset: 0; width: 100%; height: 100%; }
  .rule line { stroke: #222; shape-rendering: crispEdges; }
  .rule text { font-size: 9px; fill: #222; }
  .canvas { position: relative; background: #fff; overflow: hidden; }
  .canvas svg { shape-rendering: crispEdges; }
  .vscroll { display: flex; flex-direction: column; padding: 0 1px; }
  .vscroll button { height: 16px; }
  .track { flex: 1; display: grid; grid-template-rows: 184fr 485fr 184fr; margin-right: 1px; background: linear-gradient(90deg, #9a9896, #b0aeac); border: 1px solid #8a8886; }
  .win:nth-child(2) .track { grid-template-rows: 184fr 466fr 184fr; }
  .thumb { display: block; background: #bfc0bb; border: 1px solid #555; }
  .track .thumb { grid-row: 2; margin: 0 -1px; }

  .pagenav { display: flex; align-items: center; height: 18px; flex: none; border-top: 1px solid #8e8c8a; background: #c1bebc; }
  .pagenav button { width: 16px; flex: none; height: 17px; }
  .pagenav > button:first-child { margin-left: 18px; }
  .pagenav .ic { width: 12px; height: 12px; }
  .pagenav .ar { width: 9px; height: 9px; fill: #9b9997; }
  .of { width: 65px; text-align: center; font-size: 12px; }
  .pagenav .ptab { width: 64px; margin-left: 2px; background: #a9afb4; border-left: 1px solid #888; border-right: 1px solid #888; border-radius: 0 8px 0 0; color: #555; font-size: 11px; }
  .rest { flex: 0 1 108px; border-right: 1px solid #777; height: 15px; }
  .htrack { flex: 1; display: flex; height: 14px; padding-left: 60px; background: #a8a5a3; border: 1px solid #807e7c; }
  .htrack .thumb { width: 167px; margin: -1px 0; }

  .palette { display: flex; align-items: center; height: 19px; flex: none; background: linear-gradient(90deg, #b9b6b4, #d0cecc 6%, #c0bdbb 90%, #d6d4d2 97%, #bcb9b7); border-top: 1px solid #d8d6d4; }
  .play { width: 11px; height: 11px; margin-left: 10px; flex: none; border-radius: 50%; background: #fff; box-shadow: 0 0 2px #777; }
  .play i { border: 3px solid transparent; border-left: 5px solid #000; border-right: 0; }
  .pl { width: 17px; margin-left: 2px; flex: none; }
  .ghost { width: 16px; flex: none; }
  .sws { flex: 1; display: flex; height: 17px; border: 1px solid #555; margin-right: 3px; }
  .sw { flex: 1; min-width: 0; border-right: 1px solid rgba(60, 60, 50, .6); }
  .sw:last-child { border-right: 0; }
  .nocol { background: #fff; }
  .nocol svg { width: 100%; height: 15px; stroke: #333; }
  .picked { outline: 2px solid #eeecdf; border: 1px solid #222; z-index: 1; position: relative; outline-offset: -1px; box-shadow: inset 0 0 0 1px #222; }
  .pr { width: 12px; }
  .pe { width: 16px; margin-right: 8px; }
  .pe .chev { fill: #222; }
  .docpal .ic { width: 14px; height: 14px; margin-left: 5px; }
  .docpal .ic + .ic { margin-left: 2px; }
  .docpal em { flex: 1; text-align: center; color: #6e6c6a; padding-right: 24px; }

  .dock { width: 25px; flex: none; border-left: 1px solid #8f8d8b; background: #bfbcba; display: flex; flex-direction: column; align-items: center; padding: 2px 0 0; gap: 2px; }
  .coll { height: 14px; font-size: 16px; color: #444; margin-bottom: 4px; }
  .x6 .coll { margin-bottom: 10px; }
  .dock.x6 { gap: 0; }
  .dtab { width: 19px; flex: none; flex-direction: column; justify-content: flex-start; gap: 3px; padding-top: 2px; border: 1px solid #a3a19f; border-radius: 3px; color: #7c7a78; white-space: nowrap; }
  .dtab span { writing-mode: vertical-rl; }
  .dtab .ic { width: 15px; height: 15px; }
  .dtab.on { background: #d3d1cf; color: #222; }
  .dtab.dark { background: #2f2d2c; color: #5a5856; }
  .dtab b { color: #666; font-size: 12px; }

  .status { position: relative; display: grid; grid-template-columns: 530px minmax(0, 1fr); grid-template-rows: 19px 19px; height: 42px; flex: none; padding-top: 3px; background: linear-gradient(#e0dedc, #c2bfbd 35%, #bbb8b6); white-space: nowrap; }
  .status > div { display: flex; align-items: center; min-width: 0; }
  .s1, .s2 { padding-left: 4px; }
  .status .pos { width: 374px; }
  .pos2 { width: 107px; }
  .fi .ic { width: 15px; height: 15px; margin: 0 4px 0 2px; }
  .chip { width: 16px; height: 15px; margin-right: 4px; background: #231c1b; }
  .chip.green { background: #69c434; }
  .status.x6 { grid-template-columns: 526px minmax(0, 1fr); }
  .x6 .pos { width: 107px; }
  .x6 .obj { width: 222px; }
  .tri { border: 4px solid transparent; border-left: 5px solid #111; border-right: 0; margin-right: 119px; }
  .status.x6 .pos { width: 107px; }
  .x6 .chip.green { background: #82c41e; }
  .grip { position: absolute; right: 2px; bottom: 2px; width: 10px; height: 10px; stroke: #e8e8e8; stroke-width: 2; }

  .dialog { position: absolute; left: 276px; top: 80px; width: 424px; padding: 0 5px 5px; border-radius: 6px; background: #232121; box-shadow: 0 8px 32px 4px rgba(0, 0, 0, .6); }
  .dialog.x6 { left: 291px; top: 84px; }
  .dtitle { display: flex; align-items: center; justify-content: space-between; height: 23px; margin: 0 -4px; padding: 0 24px 2px 3px; border-radius: 5px 5px 0 0; background: linear-gradient(#403e3d, #2d2b2a); color: #8d8b89; font: 600 10px/14px "Open Sans", sans-serif; }
  .dclose { color: #151515; font-size: 14px; width: 18px; }
  .dbody { padding: 7px 6px 8px; background: #c3c0be; }
  .tabs { display: flex; align-items: flex-end; height: 20px; }
  .tab { height: 18px; padding: 0 4px 3px 5px; gap: 6px; border: 1px solid #a9a7a5; border-bottom: 0; color: #6e6c6a; font: 600 11px/14px "Open Sans", sans-serif; }
  .tab .ic { width: 14px; height: 14px; }
  .tab.on { height: 21px; margin-bottom: -1px; background: #c8c5c3; border-color: #dddbd9; position: relative; padding-bottom: 5px; }
  .panel { display: grid; grid-template-columns: 222px minmax(0, 1fr); column-gap: 8px; height: 270px; padding: 11px 8px 8px; border: 1px solid #d9d7d5; border-right-color: #a5a3a1; border-bottom-color: #a5a3a1; border-radius: 0 2px 3px 3px; }
  .left { display: flex; flex-direction: column; gap: 11px; }
  .model { display: flex; align-items: center; height: 20px; }
  .model label { width: 35px; }
  .x6 .model label { width: 37px; }
  .x6 .model .sel { height: 18px; }
  .pick { display: flex; justify-content: space-between; height: 217px; }
  .field { position: relative; width: 199px; }
  .x4 .field { background:
    linear-gradient(rgba(23, 24, 26, 0) 66%, #17181a 97%),
    radial-gradient(ellipse 64px 72px at 100% 66%, rgba(0, 90, 56, .95), rgba(0, 110, 56, .6) 50%, rgba(0, 130, 60, 0)),
    radial-gradient(ellipse 90px 120px at 100% 42%, rgba(14, 160, 60, .8), rgba(14, 160, 60, 0)),
    linear-gradient(rgba(23, 24, 26, 0) 0, rgba(50, 58, 66, .22) 25%, rgba(40, 46, 54, .6) 54%, rgba(28, 30, 32, .88) 78%, #17181a 97%),
    linear-gradient(90deg, #fff, #c8e8a0 30%, #8ed04e 62%, #64c23c 82%, #2eb446); }
  .x6 .field { background:
    linear-gradient(rgba(23, 24, 26, 0) 0, rgba(60, 68, 80, .2) 25%, rgba(40, 46, 54, .55) 52%, rgba(28, 30, 32, .86) 75%, #141617 92%),
    radial-gradient(ellipse 110px 80px at 90% 40%, rgba(124, 200, 16, .9), rgba(120, 190, 20, 0)),
    linear-gradient(90deg, #fff, #d2e8a4 32%, #a4d664 64%, #8ace44 88%, #86cc44); }
  .field i { position: absolute; left: 157px; top: 49px; width: 8px; height: 8px; border: 1px solid #5f6a78; }
  .x6 .field i { left: 163px; top: 48px; border-color: #3c4c78; }
  .hue { position: relative; width: 15px; background: linear-gradient(#f43e00, #f04060 10%, #b0277f 17%, #3a1a78 25%, #361a78 36%, #1c4a9c 41%, #00a0e0 46%, #00a5a4 52%, #00a05a 59%, #00a040 69%, #3cb52e 77%, #f6ef00 83%, #f98b00 90%, #ee4a00 95%, #e63a0a); }
  .x6 .hue { background: linear-gradient(#f00, #f0f 17%, #00f 33%, #0ff 50%, #0f0 67%, #ff0 83%, #f00); }
  .hue i { position: absolute; left: -2px; top: 163px; width: 19px; height: 4px; border: 1px solid #5c5a4c; }
  .x6 .hue i { border-color: #303a60; }

  .right { display: flex; flex-direction: column; margin-top: -5px; min-width: 0; }
  .x6 .right { margin-top: 1px; }
  fieldset { margin: 0 0 4px; padding: 0 8px 0 12px; min-width: 0; height: 134px; border: 1px solid #d6d4d2; border-bottom-color: #8e8c8a; border-right-color: #b0aeac; border-radius: 3px; }
  fieldset.ref { display: flex; justify-content: space-between; height: 72px; padding: 3px 6px 0 8px; }
  legend { padding: 0 2px; margin-left: -7px; color: #777573; font: 600 10px/12px "Noto Sans", sans-serif; }
  .ref legend { margin-left: -3px; }
  .labels { display: flex; flex-direction: column; gap: 12px; padding-top: 8px; }
  .refsw { width: 64px; height: 50px; background: #69c434; }
  .comps { display: flex; gap: 22px; }
  fieldset .comps { padding-top: 10px; }
  .cmyk { display: grid; grid-template-columns: 14px 46px; row-gap: 7px; align-items: center; }
  .num { display: flex; height: 20px; padding: 2px 2px 2px 5px; background: #fff; }
  .num input { width: 100%; min-width: 0; flex: 1; height: 14px; color: #666; }
  .num button { width: 10px; flex: none; background: #b5b2b0; }
  .num svg { width: 8px; height: 14px; fill: none; stroke: #333; }
  .rgb { display: grid; grid-template-columns: 12px 20px; grid-auto-rows: 18px; text-align: right; }
  .rgb dt { text-align: left; }
  .name { margin-top: auto; display: flex; flex-direction: column; gap: 3px; padding-bottom: 2px; }
  .name .sel { flex: none; height: 19px; }
  .top6 { display: flex; gap: 6px; margin-left: 2px; }
  .eye { width: 20px; height: 21px; border: 1px solid #77808a; border-radius: 2px; background: linear-gradient(#98a2aa, #bcc2c6); }
  .bigsw { flex: 1; height: 64px; background: #82c41e; border: 1px solid #6f8f50; }
  .rgbsel { width: 62px; height: 18px; margin: 11px 0 8px auto; display: flex; }
  .x6 .comps { margin-left: 7px; gap: 18px; }
  .x6 .cmyk { grid-template-columns: 21px 46px; }
  .x6 .rgb { grid-template-columns: 21px 24px; text-align: left; }
  .x6 .name { padding-left: 8px; }

  .btns { display: flex; padding-top: 5px; }
  .b { height: 20px; border: 1px solid #a19f9d; border-radius: 2px; background: linear-gradient(#d6d4d2, #bab7b5); box-shadow: inset 0 1px #e6e4e2; }
  .add { width: 85px; }
  .split { width: 14px; margin: 0 8px 0 1px; }
  .opt { width: 68px; gap: 6px; }
  .act { width: 68px; margin-left: 8px; padding-bottom: 2px; color: #777573; font: 600 10px/12px "Open Sans", sans-serif; }
  .act.def { border-color: #7d97ae; background: linear-gradient(#dfe5ea, #b3bfc8); color: #444; }
</style>
